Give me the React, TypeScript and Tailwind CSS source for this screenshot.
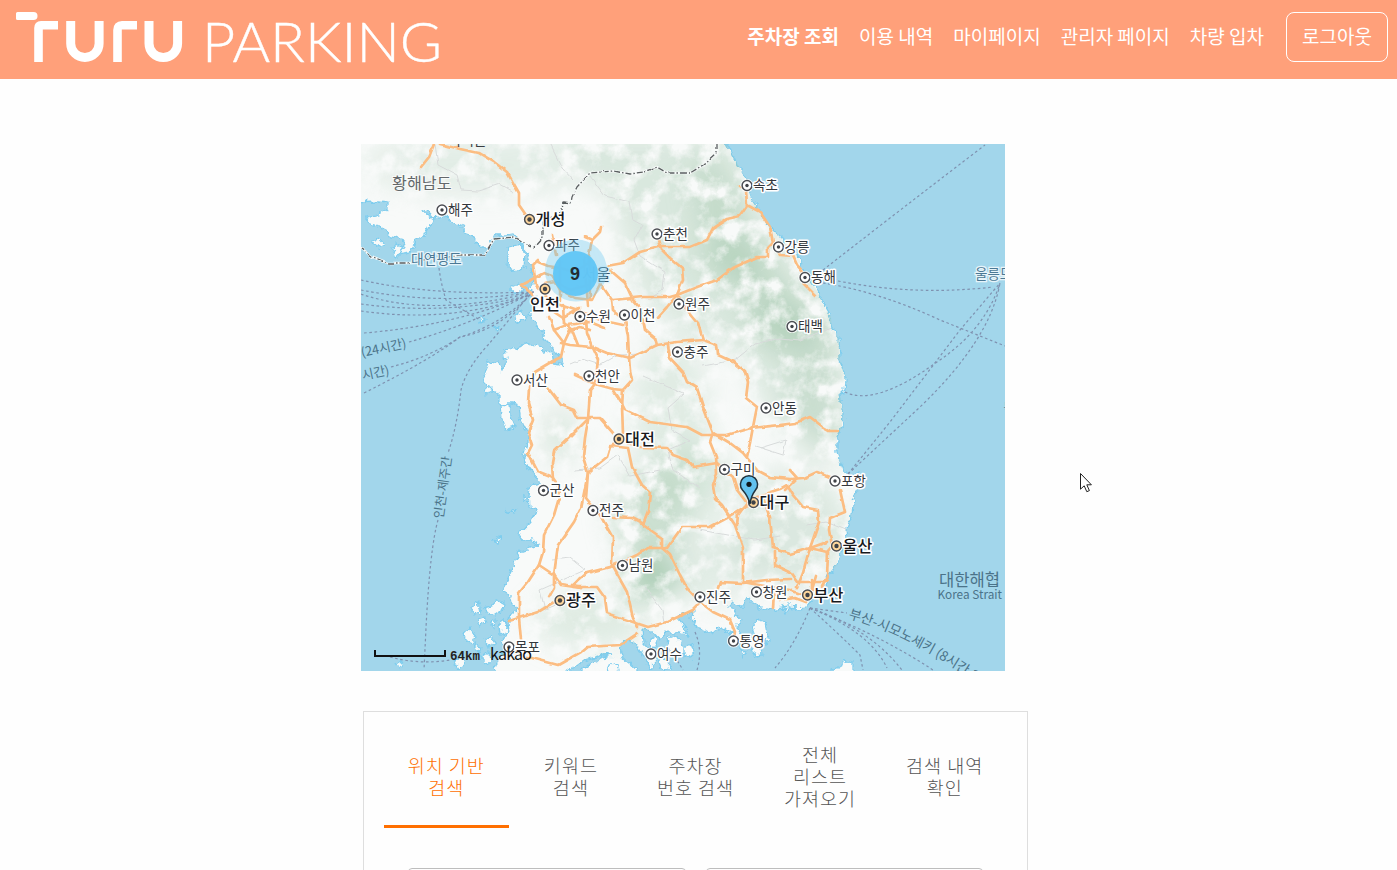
import React from "react";

const NAV = ["이용 내역", "마이페이지", "관리자 페이지", "차량 입차"];

const TABS = [
  ["위치 기반", "검색"],
  ["키워드", "검색"],
  ["주차장", "번호 검색"],
  ["전체", "리스트", "가져오기"],
  ["검색 내역", "확인"],
];

const MAINLAND =
  "350,134 722,134 727,144 737,163 747,180 751,198 757,207 770,227 783,240 797,253 805,273 817,290 823,303 831,317 832,327 839,338 840,360 846,378 845,390 840,395 843,413 842,427 837,437 837,453 843,467 845,473 852,475 858,472 860,480 857,490 853,502 852,515 847,528 848,542 840,552 837,565 827,577 823,588 813,598 808,607 797,608 787,607 773,610 760,608 752,602 748,597 745,607 740,607 733,602 729,606 733,613 743,618 737,627 740,632 744,640 738,648 729,644 732,633 723,628 710,632 697,627 692,620 693,610 677,618 683,625 687,635 677,632 667,632 660,640 653,632 642,630 643,642 650,650 657,660 650,668 643,655 637,645 627,640 620,648 623,658 637,670 637,680 583,680 583,670 590,663 603,657 613,655 603,655 585,660 575,667 560,676 520,680 500,676 494,668 498,658 508,648 502,641 509,632 508,622 516,608 508,595 503,588 508,578 514,565 519,552 539,545 531,540 521,540 519,535 531,522 538,510 529,507 528,493 531,485 541,483 529,470 524,457 528,443 528,430 521,423 519,407 511,403 499,403 499,393 488,387 483,377 489,363 498,361 502,371 506,360 504,350 518,347 524,342 538,348 551,353 553,364 564,366 560,357 553,350 549,342 544,337 534,320 528,315 534,310 541,303 528,293 534,283 531,267 526,250 521,243 514,233 504,235 494,235 489,247 481,247 471,237 464,227 451,223 448,215 434,218 428,210 424,212 433,218 424,237 414,243 411,253 398,255 404,240 391,237 381,227 368,223 366,218 380,214 388,208 388,203 378,202 350,203";

const ISLANDS = [
  "509,247 520,244 525,252 524,268 515,272 507,266 508,256",
  "510,288 519,284 524,290 516,295",
  "395,244 404,248 398,256 392,252",
  "372,240 378,238 384,245 378,248",
  "514,317 521,312 527,317 519,321",
  "479,316 485,320 481,324",
  "494,326 499,325 498,329",
  "485,390 492,388 492,393 486,394",
  "502,403 509,404 510,416 515,427 506,430 503,419",
  "471,608 478,602 480,612 473,614",
  "483,608 492,606 497,600 504,604 502,611 494,616 488,613",
  "478,619 484,617 486,624 480,627",
  "463,634 470,628 477,637 473,644 466,641",
  "499,625 505,621 508,632 500,635",
  "490,621 495,619 494,627",
  "486,640 492,636 495,643 488,648",
  "454,662 462,656 466,664 458,669",
  "474,645 481,647 479,654",
  "482,656 489,651 490,662 482,664",
  "397,664 403,660 400,669",
  "494,541 500,536 498,543",
  "512,511 516,508 514,513",
  "506,510 509,512 507,513",
  "523,496 527,498 525,502",
  "752,627 758,619 765,623 767,633 770,641 761,643 763,656 756,657 752,647 747,640 755,636",
  "740,650 746,652 742,657",
  "667,639 676,636 682,645 684,652 674,655 669,650",
  "683,647 691,644 695,650 690,659 683,655",
  "650,640 655,637 657,646 651,647",
  "659,661 665,660 672,668 663,671",
  "833,669 841,664 846,661 854,662 854,674 834,674",
  "783,607 789,606 785,614",
  "610,666 617,663 620,672 608,674",
];

const ROADS = [
  "440,144 460,149 479,153 494,162 507,172 519,193 519,205 526,215",
  "434,144 429,157 421,167",
  "607,266 623,263 640,252 658,247 690,247 707,240 713,228 727,219 740,216 747,206 746,190 739,187",
  "747,205 760,212 770,227 773,243 768,248 768,257 757,257 733,268 717,280 697,287 677,295 670,297 643,297 613,300",
  "773,243 780,255 793,256 797,265 803,272 803,283 815,295",
  "659,240 662,250 670,258 682,268 683,280 677,295 667,307 658,317",
  "677,295 687,310 698,323 703,340 717,345 718,355 733,362 745,372 748,382 746,398 757,407 753,427 750,443 747,457",
  "601,227 600,232 592,240 585,237",
  "592,240 589,255 590,300",
  "610,270 625,283 633,300 640,308 643,320 645,330 655,338 657,345",
  "600,283 612,300 613,310 625,320 628,337 629,358 630,370 632,380 623,390 622,407 623,433",
  "561,343 570,345 592,347 607,353 630,358 643,352 657,345 677,342 703,340",
  "668,345 670,358 683,372 687,382 697,388 703,407 713,433 710,442 716,457 717,473 713,485 715,498 722,505 735,525 743,548 743,582 770,587",
  "575,375 595,384 613,389 623,390",
  "613,389 620,400 625,410 650,422 687,427 702,435 727,435 752,428 780,425 795,423 810,417 823,427 830,431 837,431",
  "713,433 730,443 743,453 757,470 770,477 790,479 804,478 817,472 830,477",
  "586,318 587,333 592,347 598,360 595,384 590,390 588,420 585,438 583,457 588,473 586,498 600,515 613,538 612,565 627,592 633,618 638,627",
  "548,388 561,405 574,410 578,418 600,418 613,433",
  "587,420 570,437 554,452 552,463 553,480",
  "564,343 561,357 551,362 534,372 529,387 528,403 533,420 528,433 532,445 528,453 538,472 553,478 558,485 559,498 554,515 544,535 543,552 539,565 528,582 519,593 519,618 521,640",
  "623,438 610,447 607,457 597,465 588,473",
  "588,473 581,508 574,522 558,545 554,575 561,585 581,588",
  "610,446 628,448 632,467 642,485 650,492 648,512 643,525 662,538 662,548 670,555 680,575 687,588 700,602 713,612 730,620 735,632 734,640",
  "628,443 640,447 667,448 673,455 687,460 693,467 717,463 733,477 737,490 747,503 738,515 737,525",
  "613,517 632,518 642,523",
  "573,585 587,573 610,567 637,555 647,548 667,548 682,527 710,527 727,518 743,508 752,503",
  "573,587 597,587 605,598 607,613 633,622 648,627 667,622 693,610 700,603",
  "528,657 558,665 581,652 587,647 620,645 638,633",
  "718,588 720,582 743,583 767,580 790,579",
  "763,498 770,518 773,548 790,554 810,548 827,552 832,546 829,530 830,518 845,512 840,490",
  "775,552 775,565 790,572 797,582 827,582",
  "752,498 780,489 787,485 793,495 803,507 818,510 819,522 810,548 803,573 797,588",
  "810,548 827,542",
  "785,490 797,478 790,470",
  "770,587 790,590 806,596",
  "780,600 795,598 806,602",
  "828,552 827,578 822,587",
  "812,580 812,590 816,576",
  "774,592 773,608",
  "509,621 538,612 558,600",
  "539,565 554,575 554,588 549,597",
  "581,588 573,586 580,578",
  "549,317 554,330 564,343 570,330 580,327 590,330",
  "563,305 564,323 572,330 578,345",
  "538,260 533,265 536,285 551,302 575,310 590,315 600,320 623,325",
  "521,285 544,273 552,276",
  "521,285 531,293 536,300",
  "547,297 551,310 563,318 580,308",
  "552,235 556,255",
  "554,330 567,325 590,322 605,328",
];

const URBAN = [
  "538,262 548,266 560,268 575,272 590,262",
  "552,276 560,290 575,298 592,300 600,284",
  "560,262 560,300",
  "545,284 556,282 570,290 588,285",
  "584,258 588,306",
];

const PROVINCES = [
  "435,144 438,165 457,175 461,190 478,191 500,184 514,192",
  "590,176 605,196 630,202 633,220 642,225 634,240 640,256 665,272 663,290 650,300",
  "550,144 562,168 573,180",
  "570,364 582,359 600,365 618,355 640,354",
  "643,376 684,394 668,408 672,430 690,440 668,450 673,470 700,488",
  "575,470 600,468 618,455 630,476 660,470",
  "552,560 570,558 585,570 540,590 545,610 570,600 590,606",
  "703,366 735,360 755,344 780,338 800,340 832,328",
  "755,446 783,455 786,440 760,448",
  "700,530 727,535 755,540 780,536",
  "645,587 662,610 664,622",
  "806,525 826,522 846,530",
];

const FERRIES = [
  "M823 270Q900 210 985 145",
  "M838 281Q915 296 993 287",
  "M823 283Q880 292 940 320L1005 346",
  "M848 474L890 422L960 330L1000 283",
  "M848 474L920 407Q990 340 1000 283",
  "M845 392Q875 407 937 362Q985 330 1000 283",
  "M361 280Q430 296 534 292",
  "M361 290Q440 306 534 292",
  "M361 294Q430 318 534 292",
  "M361 304Q450 316 530 295",
  "M361 311Q450 324 530 295",
  "M364 333Q460 325 534 292",
  "M409 342Q470 325 534 292",
  "M391 367Q430 357 460 337Q500 330 530 295",
  "M364 393Q430 360 460 337Q500 325 530 295",
  "M439 268Q441 284 446 300L480 320",
  "M525 300Q505 325 488 345Q466 369 461 390Q457 427 448 453",
  "M438 520Q430 548 426 628L424 670",
  "M390 657Q420 665 450 660",
  "M810 608Q795 645 775 668",
  "M810 608L847 613",
  "M810 608Q840 635 860 655L863 670",
  "M810 608Q870 632 887 668",
  "M810 608Q870 629 902 670",
  "M810 608Q880 635 933 670",
  "M695 632Q703 650 697 670",
  "M672 652L683 670",
];

const BORDER =
  "716,144 716,153 703,165 690,173 667,173 657,167 650,171 630,174 613,171 590,173 577,187 572,197 571,203 564,202 558,217 543,220 543,237 534,247 514,237 494,239 484,255 461,255 411,263 388,263 373,257 361,248";

type City = [string, number, number];
const TOWNS: City[] = [
  ["해주", 442, 210], ["파주", 549, 245.5], ["춘천", 657, 234], ["속초", 747, 185.5],
  ["강릉", 778.5, 247], ["동해", 805, 277.5], ["태백", 792, 326.5], ["원주", 679, 304],
  ["이천", 624.5, 315], ["수원", 580, 316.5], ["충주", 677.5, 352], ["천안", 589, 376],
  ["서산", 517, 380], ["안동", 766, 408], ["구미", 724.5, 469.5], ["포항", 835, 481],
  ["군산", 543.5, 490.5], ["전주", 593, 510.5], ["남원", 622.5, 565.5], ["진주", 700, 597],
  ["창원", 756.5, 592], ["통영", 733.5, 641], ["여수", 651, 654], ["목포", 509, 647],
];
const METROS: City[] = [
  ["개성", 529.5, 219.5], ["대전", 619, 439], ["대구", 753.5, 502.5],
  ["울산", 836.5, 546], ["부산", 807.5, 595], ["광주", 560, 600.5],
];

function Ring({ x, y, metro = false }: { x: number; y: number; metro?: boolean }) {
  return (
    <g>
      <circle cx={x} cy={y} r="6.6" fill="#fff" fillOpacity=".85" />
      <circle cx={x} cy={y} r="4.9" fill={metro ? "#ffd79c" : "#fff"} stroke="#4b4e53" strokeWidth="1.5" />
      <circle cx={x} cy={y} r={metro ? 2.2 : 1.7} fill="#3f4247" />
    </g>
  );
}

function Town({ city, metro = false }: { city: City; metro?: boolean }) {
  const [name, x, y] = city;
  return (
    <g>
      <Ring x={x} y={y} metro={metro} />
      <text
        x={x + 6}
        y={y + (metro ? 5.7 : 4.8)}
        fontSize={metro ? 16.2 : 13.5}
        fontWeight={metro ? 500 : 400}
        fill={metro ? "#17191c" : "#34373c"}
        stroke="#fff"
        strokeWidth="3"
        paintOrder="stroke"
        strokeLinejoin="round"
      >
        {name}
      </text>
    </g>
  );
}

function KoreaMap() {
  return (
    <svg className="block h-[527px] w-[644px] font-['Noto_Sans_CJK_KR',sans-serif]" viewBox="361 144 644 527">
      <defs>
        <filter id="coast" filterUnits="userSpaceOnUse" x="340" y="124" width="690" height="570">
          <feTurbulence type="fractalNoise" baseFrequency="0.14" numOctaves="3" seed="4" result="n" />
          <feDisplacementMap in="SourceGraphic" in2="n" scale="9" xChannelSelector="R" yChannelSelector="G" />
        </filter>
        <filter id="wobble" filterUnits="userSpaceOnUse" x="340" y="124" width="690" height="570">
          <feTurbulence type="fractalNoise" baseFrequency="0.09" numOctaves="2" seed="9" result="n" />
          <feDisplacementMap in="SourceGraphic" in2="n" scale="3.5" xChannelSelector="R" yChannelSelector="G" />
        </filter>
        <filter id="soft" filterUnits="userSpaceOnUse" x="340" y="124" width="690" height="570" colorInterpolationFilters="sRGB">
          <feTurbulence type="fractalNoise" baseFrequency="0.05" numOctaves="5" seed="2" result="n" />
          <feColorMatrix in="n" type="matrix" values="0 0 0 0 0  0 0 0 0 0  0 0 0 0 0  3.2 0 0 0 -0.85" result="mask" />
          <feGaussianBlur in="SourceGraphic" stdDeviation="14" result="b" />
          <feComposite in="b" in2="mask" operator="in" />
        </filter>
        <clipPath id="landClip">
          <polygon points={MAINLAND} />
        </clipPath>
      </defs>
      <rect x="361" y="144" width="644" height="527" fill="#a2d6eb" />
      <g filter="url(#coast)" fill="#f8faf9" stroke="#7ecdee" strokeWidth="1.3">
        <polygon points={MAINLAND} />
        {ISLANDS.map((p) => (
          <polygon key={p} points={p} />
        ))}
      </g>
      <g clipPath="url(#landClip)">
        <g filter="url(#soft)" fill="#9fc5aa">
          <path d="M560 134H735L755 190L780 235L820 290L842 330L845 460L770 420L740 350L700 340L640 300L610 200Z" fillOpacity=".34" />
          <path d="M690 165L720 160L745 225L790 290L815 350L780 345L730 285L700 230Z" fillOpacity=".4" />
          <ellipse cx="730" cy="260" rx="30" ry="20" fillOpacity=".35" />
          <ellipse cx="780" cy="325" rx="34" ry="26" fillOpacity=".4" />
          <ellipse cx="652" cy="578" rx="28" ry="20" fillOpacity=".9" />
          <ellipse cx="650" cy="515" rx="38" ry="48" fillOpacity=".5" />
          <ellipse cx="670" cy="410" rx="40" ry="75" fillOpacity=".26" />
          <ellipse cx="815" cy="385" rx="24" ry="80" fillOpacity=".3" />
          <ellipse cx="790" cy="530" rx="60" ry="60" fillOpacity=".32" />
          <ellipse cx="695" cy="480" rx="35" ry="38" fillOpacity=".35" />
          <ellipse cx="560" cy="435" rx="20" ry="30" fillOpacity=".3" />
          <ellipse cx="480" cy="165" rx="120" ry="30" fillOpacity=".24" />
          <ellipse cx="590" cy="620" rx="60" ry="28" fillOpacity=".28" />
          <ellipse cx="710" cy="565" rx="45" ry="40" fillOpacity=".24" />
        </g>
      </g>
      <g fill="none" stroke="#d8dbdb" strokeWidth="1" filter="url(#wobble)">
        {PROVINCES.map((p) => (
          <polyline key={p} points={p} />
        ))}
      </g>
      <g fill="none" stroke="#7f92b0" strokeWidth="1.2" strokeDasharray="2.6 2.6">
        {FERRIES.map((d) => (
          <path key={d} d={d} />
        ))}
      </g>
      <g fill="none" strokeLinejoin="round" strokeLinecap="round" filter="url(#wobble)">
        {ROADS.map((p) => (
          <polyline key={p} points={p} stroke="#fcbd82" strokeWidth="2.7" />
        ))}
        {URBAN.map((p) => (
          <polyline key={p} points={p} stroke="#fcbd82" strokeWidth="2.5" />
        ))}
        <polyline points={BORDER} stroke="#f7faf9" strokeWidth="2.6" />
        <polyline points={BORDER} stroke="#5a5e60" strokeWidth="1.3" strokeDasharray="6 2 1.5 2" strokeLinecap="butt" />
      </g>

      {TOWNS.map((c) => (
        <Town key={c[0]} city={c} />
      ))}
      {METROS.map((c) => (
        <Town key={c[0]} city={c} metro />
      ))}
      <g>
        <Ring x={545} y={289} metro />
        <text x="530" y="309.7" fontSize="16.2" fontWeight="500" fill="#17191c" stroke="#fff" strokeWidth="3" paintOrder="stroke">인천</text>
        <text x="582" y="280" fontSize="15.5" fill="#3b5668" stroke="#e6f4fa" strokeWidth="2.5" paintOrder="stroke">서울</text>
      </g>
      <g fill="#63686a">
        <text x="392" y="188.5" fontSize="16.2" stroke="#f8faf9" strokeWidth="2" paintOrder="stroke">황해남도</text>
        <text x="449" y="145" fontSize="13.5" fill="#3a3d42">사리원</text>
      </g>
      <g fill="#4b7995" stroke="#e6f4fa" strokeWidth="2.6" paintOrder="stroke">
        <text x="411" y="264" fontSize="13.8">대연평도</text>
        <text x="975" y="278.5" fontSize="13.5">울릉도</text>
      </g>
      <g fill="#4b7389">
        <text x="939" y="585.8" fontSize="16.6">대한해협</text>
        <text x="937.5" y="599" fontSize="11.8">Korea Strait</text>
        <text x="1003.5" y="412" fontSize="12">독도</text>
        <text transform="translate(362 357) rotate(-12)" fontSize="12.7">(24시간)</text>
        <text transform="translate(363 380) rotate(-12)" fontSize="12.7">시간)</text>
        <text transform="translate(443 519) rotate(-82)" fontSize="12.7">인천-제주간</text>
        <path id="busanLine" d="M848 618Q912 636 990 692" fill="none" />
        <text fontSize="13.5">
          <textPath href="#busanLine">부산-시모노세키 (8시간 30분)</textPath>
        </text>
      </g>

      <circle cx="576" cy="270.5" r="31" fill="#72cbf2" fillOpacity=".38" />
      <circle cx="575.5" cy="273.5" r="22.5" fill="#62c6f6" fillOpacity=".97" />
      <text x="575" y="280" textAnchor="middle" fontSize="18" fontWeight="700" fill="#242c31" className="font-['Liberation_Sans',sans-serif]">9</text>

      <path d="M750 504Q748 496 742.5 490A8.6 8.6 0 1 1 755.5 490Q751 496 750 504Z" fill="#62c1ee" stroke="#20323d" strokeWidth="1.5" />
      <circle cx="749" cy="484.3" r="2.6" fill="#10171b" />

      <path d="M375 650V656H445V650" fill="none" stroke="#111" strokeWidth="2" />
      <text x="450" y="660" fontSize="12.5" fontWeight="700" fill="#222" className="font-['Liberation_Mono',monospace]">64km</text>
      <text x="490" y="660" fontSize="16" textLength="42" fill="#111">kakao</text>
    </svg>
  );
}

function Logo() {
  return (
    <svg className="block h-[79px] w-[450px]" viewBox="0 0 450 79" role="img">
      <path d="M17.5 12H33.5A4 4 0 0 1 33.5 20H17.5Q16 20 16 18.5V13.5Q16 12 17.5 12Z" fill="#fff" />
      <g fill="none" stroke="#fff" strokeWidth="9" strokeLinejoin="round">
        <path d="M38.5 62V28Q38.5 25.2 41 25.2H58" strokeWidth="8.6" />
        <path d="M70.7 21V43.5A14.2 14 0 0 0 99.1 43.5V21" />
        <path d="M117.5 62V30Q117.5 25.2 122 25.2H137" strokeWidth="8.6" />
        <path d="M149 21V43.5A14.2 14 0 0 0 177.6 43.5V21" />
      </g>
      <text x="202" y="61.5" fontSize="56" fontWeight="300" fill="#fff" stroke="#fff" strokeWidth=".4" textLength="240" lengthAdjust="spacingAndGlyphs" className="font-[Lato,sans-serif]">
        PARKING
      </text>
    </svg>
  );
}

export default function App() {
  return (
    <div className="relative h-[870px] w-full overflow-hidden bg-[#fefefe] font-['Noto_Sans_CJK_KR',sans-serif]">
      <header className="flex h-[79px] items-start justify-between bg-[#ffa07a] pr-[9px] text-white">
        <Logo />
        <nav className="flex items-center gap-5 pt-3 text-[19px] leading-[48px] whitespace-nowrap">
          <a className="-mt-0.5 font-bold">주차장 조회</a>
          {NAV.map((item) => (
            <a key={item} className="-mt-0.5">{item}</a>
          ))}
          <button className="ml-0.5 h-[50px] w-[102px] rounded-lg border border-white pb-0.5 leading-[46px]">로그아웃</button>
        </nav>
      </header>

      <main>
        <div className="mt-[65px] ml-[361px] h-[527px] w-[644px] overflow-hidden">
          <KoreaMap />
        </div>

        <section className="mt-10 ml-[363px] h-[220px] w-[665px] border border-[#dedede] px-5 pt-5">
          <div className="grid grid-cols-5">
            {TABS.map((lines, i) => (
              <button
                key={lines.join(" ")}
                className={
                  i === 0
                    ? "flex h-24 flex-col items-center justify-center border-b-3 border-[#ff6f00] pb-[5px] text-[18.5px] leading-[22px] font-light tracking-[1px] text-[#ff6f00]"
                    : "flex h-24 flex-col items-center justify-center border-b-3 border-transparent pb-[5px] text-[18.5px] leading-[22px] font-light tracking-[1px] text-[#555]"
                }
              >
                {lines.map((line) => (
                  <span key={line}>{line}</span>
                ))}
              </button>
            ))}
          </div>
          <div className="mt-10 flex gap-5 px-6">
            <div className="h-10 w-[278px] rounded border border-[#bdbdbd]" />
            <div className="h-10 w-[278px] rounded border border-[#bdbdbd]" />
          </div>
        </section>
      </main>

      <svg className="absolute top-[472px] left-[1079px] h-[22px] w-[14px]" viewBox="0 0 14 22">
        <path d="M1.5 1.5V17.2L5.2 13.8L7.8 19.7L10.4 18.6L7.8 12.8H12.4Z" fill="#fff" stroke="#222" strokeWidth="1" />
      </svg>
    </div>
  );
}
